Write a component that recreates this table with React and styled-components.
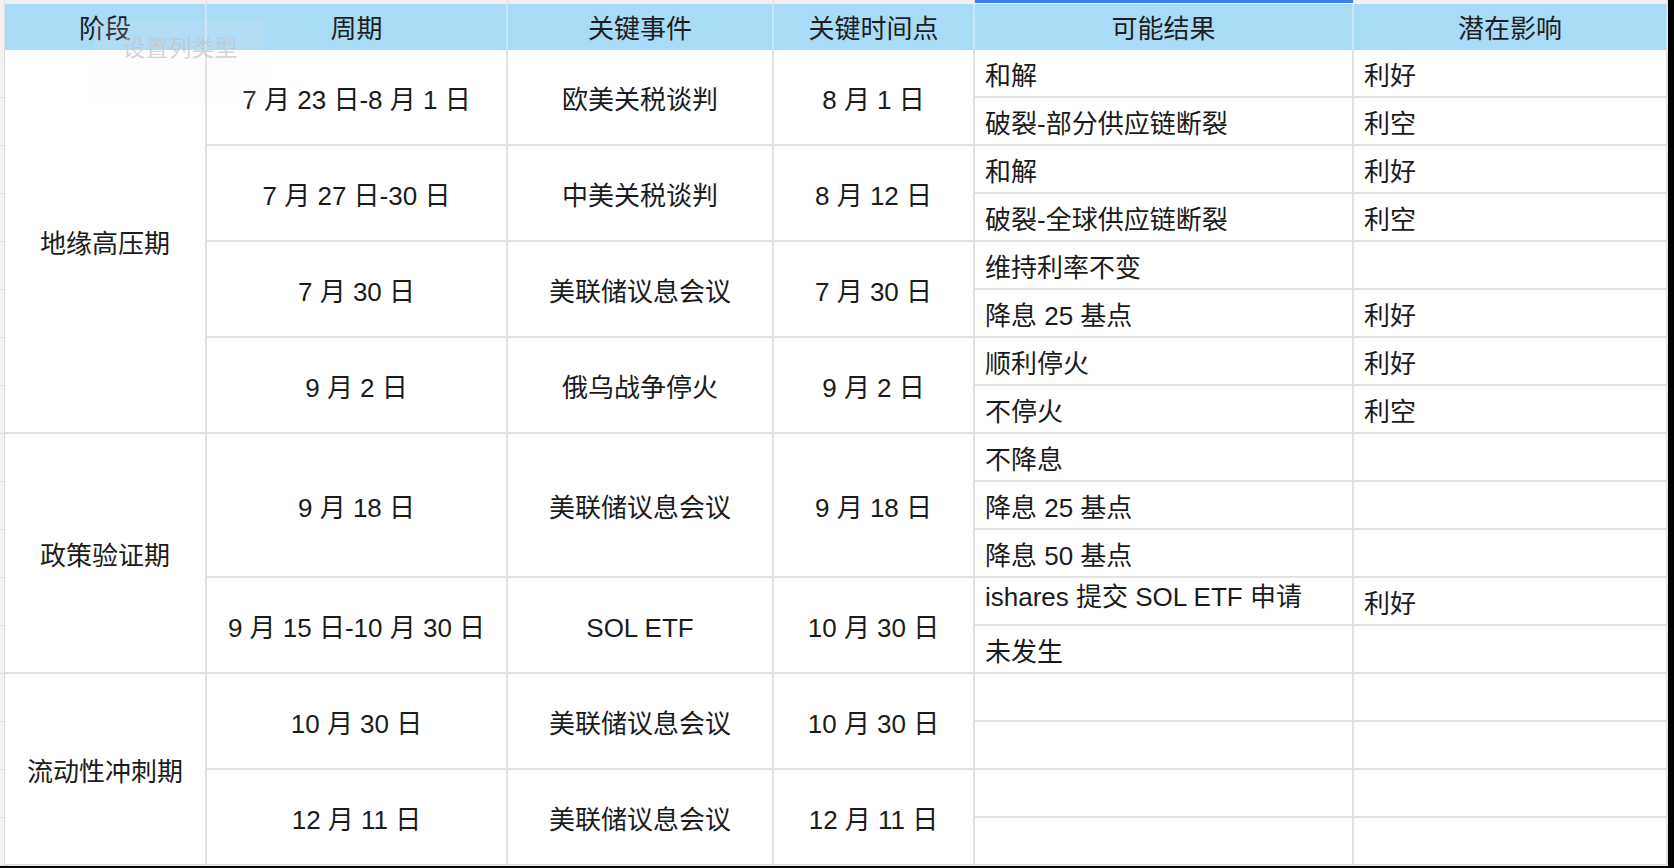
import React from 'react';
import styled, { createGlobalStyle } from 'styled-components';

const GlobalStyle = createGlobalStyle`
  html, body { margin: 0; padding: 0; background: #000; }
  body { font-family: "Liberation Sans", "Noto Sans CJK SC", sans-serif; color: #1b1b1b; }
  #root { width: 1674px; height: 868px; overflow: hidden; }
`;

const Sheet = styled.div`
  position: relative;
  width: 1668px;
  height: 866px;
  background: #fff;
  display: grid;
  grid-template-columns: 5px 202px 301px 266px 201px 379px 314px;
  grid-template-rows: 4px 46px repeat(17, 48px);
  overflow: hidden;
`;

const Corner = styled.div`
  grid-column: 1;
  grid-row: 1 / span 2;
  background: #f1f1f1;
  border-right: 1px solid #dedede;
`;

const ColStrip = styled.div`
  grid-column: ${p => p.$col};
  grid-row: 1;
  background: ${p => (p.$selected ? '#3f7ef2' : '#f1f1f1')};
  border-right: 1px solid #dedede;
  height: ${p => (p.$selected ? '3px' : '4px')};
`;

const Gutter = styled.div`
  grid-column: 1;
  grid-row: ${p => p.$row};
  background: #f3f3f3;
  border-right: 1px solid #dcdcdc;
  border-bottom: 1px solid #dcdcdc;
  box-sizing: border-box;
`;

const HeadCell = styled.div`
  grid-column: ${p => p.$col};
  grid-row: 2;
  background: #a8dbf5;
  border-right: 2px solid #c8e8f9;
  box-sizing: border-box;
  display: flex;
  align-items: center;
  justify-content: center;
  font-size: 26px;
  line-height: 1.2;
  color: #1e1e1e;
  padding-top: 5px;
`;

const Cell = styled.div`
  grid-column: ${p => p.$col};
  grid-row: ${p => p.$row} / span ${p => p.$span || 1};
  border-right: 2px solid #e1e1e1;
  border-bottom: 2px solid #e1e1e1;
  box-sizing: border-box;
  display: flex;
  align-items: center;
  justify-content: ${p => (p.$left ? 'flex-start' : 'center')};
  padding: ${p => (p.$left ? '0 10px' : '0')};
  padding-top: ${p => (p.$raise ? '0' : '8px')};
  padding-bottom: ${p => (p.$raise ? '6px' : '0')};
  font-size: 26px;
  line-height: 1.2;
  white-space: nowrap;
  color: #1b1b1b;
  background: #fff;
`;

const GhostTip = styled.div`
  position: absolute;
  left: 95px;
  top: 20px;
  width: 170px;
  height: 84px;
  border-radius: 4px;
  background: rgba(242, 242, 242, 0.12);
  display: flex;
  justify-content: center;
  padding-top: 15px;
  box-sizing: border-box;
  font-size: 23px;
  line-height: 1.2;
  color: rgba(195, 195, 195, 0.7);
  pointer-events: none;
`;

const headers = ['阶段', '周期', '关键事件', '关键时间点', '可能结果', '潜在影响'];

const stages = [
  { name: '地缘高压期', row: 1, span: 8 },
  { name: '政策验证期', row: 9, span: 5 },
  { name: '流动性冲刺期', row: 14, span: 4 },
];

const events = [
  { period: '7 月 23 日-8 月 1 日', event: '欧美关税谈判', time: '8 月 1 日', row: 1, span: 2 },
  { period: '7 月 27 日-30 日', event: '中美关税谈判', time: '8 月 12 日', row: 3, span: 2 },
  { period: '7 月 30 日', event: '美联储议息会议', time: '7 月 30 日', row: 5, span: 2 },
  { period: '9 月 2 日', event: '俄乌战争停火', time: '9 月 2 日', row: 7, span: 2 },
  { period: '9 月 18 日', event: '美联储议息会议', time: '9 月 18 日', row: 9, span: 3 },
  { period: '9 月 15 日-10 月 30 日', event: 'SOL ETF', time: '10 月 30 日', row: 12, span: 2 },
  { period: '10 月 30 日', event: '美联储议息会议', time: '10 月 30 日', row: 14, span: 2 },
  { period: '12 月 11 日', event: '美联储议息会议', time: '12 月 11 日', row: 16, span: 2 },
];

const outcomes = [
  ['和解', '利好'],
  ['破裂-部分供应链断裂', '利空'],
  ['和解', '利好'],
  ['破裂-全球供应链断裂', '利空'],
  ['维持利率不变', ''],
  ['降息 25 基点', '利好'],
  ['顺利停火', '利好'],
  ['不停火', '利空'],
  ['不降息', ''],
  ['降息 25 基点', ''],
  ['降息 50 基点', ''],
  ['ishares 提交 SOL ETF 申请', '利好', true],
  ['未发生', ''],
  ['', ''],
  ['', ''],
  ['', ''],
  ['', ''],
];

// body rows start at grid row 3
const R = r => r + 2;

export default function App() {
  return (
    <>
      <GlobalStyle />
      <Sheet>
        <Corner />
        {headers.map((h, i) => (
          <ColStrip key={'s' + i} $col={i + 2} $selected={i === 4} />
        ))}
        {headers.map((h, i) => (
          <HeadCell key={'h' + i} $col={i + 2}>{h}</HeadCell>
        ))}
        {outcomes.map((_, i) => (
          <Gutter key={'g' + i} $row={R(i + 1)} />
        ))}
        {stages.map(s => (
          <Cell key={s.name} $col={2} $row={R(s.row)} $span={s.span}>{s.name}</Cell>
        ))}
        {events.map(e => (
          <React.Fragment key={e.row}>
            <Cell $col={3} $row={R(e.row)} $span={e.span}>{e.period}</Cell>
            <Cell $col={4} $row={R(e.row)} $span={e.span}>{e.event}</Cell>
            <Cell $col={5} $row={R(e.row)} $span={e.span}>{e.time}</Cell>
          </React.Fragment>
        ))}
        {outcomes.map(([o, imp, raise], i) => (
          <React.Fragment key={'o' + i}>
            <Cell $col={6} $row={R(i + 1)} $left $raise={raise}>{o}</Cell>
            <Cell $col={7} $row={R(i + 1)} $left>{imp}</Cell>
          </React.Fragment>
        ))}
        <GhostTip>设置列类型</GhostTip>
      </Sheet>
    </>
  );
}
